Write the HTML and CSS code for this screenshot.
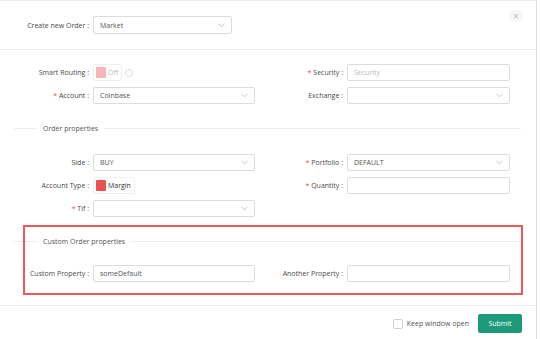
FILE: index.html
```html
<!DOCTYPE html>
<html lang="en">
  <head>
    <meta charset="UTF-8" />
    <meta name="viewport" content="width=device-width, initial-scale=1.0" />
    <title>Create new Order</title>
    <link rel="stylesheet" href="styles.css">
  </head>
  <body>
    <div class="modal">
      <div class="modal-header">
        <div class="field">
          <label class="lbl lbl-left">Create new Order :</label>
          <div class="select select-sm"><span>Market</span><svg class="chev" viewBox="0 0 8 5"><path d="M0.5 0.5 L4 4 L7.5 0.5" /></svg></div>
        </div>
        <button class="close" type="button">&times;</button>
      </div>

      <div class="modal-body">
        <div class="grid">
          <div class="col">
            <div class="field">
              <label class="lbl lbl-left">Smart Routing :</label>
              <div class="toggle"><span class="sq sq-off"></span><span class="toggle-off">Off</span></div>
              <span class="info">?</span>
            </div>
            <div class="field">
              <label class="lbl lbl-left"><i class="req">*</i> Account :</label>
              <div class="select"><span>Coinbase</span><svg class="chev" viewBox="0 0 8 5"><path d="M0.5 0.5 L4 4 L7.5 0.5" /></svg></div>
            </div>
          </div>
          <div class="col">
            <div class="field">
              <label class="lbl lbl-right"><i class="req">*</i> Security :</label>
              <div class="input"><span class="ph">Security</span></div>
            </div>
            <div class="field">
              <label class="lbl lbl-right">Exchange :</label>
              <div class="select"><span></span><svg class="chev" viewBox="0 0 8 5"><path d="M0.5 0.5 L4 4 L7.5 0.5" /></svg></div>
            </div>
          </div>
        </div>

        <div class="divider"><span>Order properties</span></div>

        <div class="grid">
          <div class="col">
            <div class="field">
              <label class="lbl lbl-left">Side :</label>
              <div class="select"><span>BUY</span><svg class="chev" viewBox="0 0 8 5"><path d="M0.5 0.5 L4 4 L7.5 0.5" /></svg></div>
            </div>
            <div class="field">
              <label class="lbl lbl-left">Account Type :</label>
              <div class="toggle"><span class="sq sq-on"></span><span class="toggle-on">Margin</span></div>
            </div>
            <div class="field">
              <label class="lbl lbl-left"><i class="req">*</i> Tif :</label>
              <div class="select"><span></span><svg class="chev" viewBox="0 0 8 5"><path d="M0.5 0.5 L4 4 L7.5 0.5" /></svg></div>
            </div>
          </div>
          <div class="col">
            <div class="field">
              <label class="lbl lbl-right"><i class="req">*</i> Portfolio :</label>
              <div class="select"><span>DEFAULT</span><svg class="chev" viewBox="0 0 8 5"><path d="M0.5 0.5 L4 4 L7.5 0.5" /></svg></div>
            </div>
            <div class="field">
              <label class="lbl lbl-right"><i class="req">*</i> Quantity :</label>
              <div class="input"><span></span></div>
            </div>
          </div>
        </div>

        <div class="custom">
          <div class="divider divider-custom"><span>Custom Order properties</span></div>
          <div class="grid">
            <div class="col">
              <div class="field">
                <label class="lbl lbl-left">Custom Property :</label>
                <div class="input"><span>someDefault</span></div>
              </div>
            </div>
            <div class="col">
              <div class="field">
                <label class="lbl lbl-right">Another Property :</label>
                <div class="input"><span></span></div>
              </div>
            </div>
          </div>
          <div class="highlight"></div>
        </div>
      </div>

      <div class="modal-footer">
        <label class="keep"><span class="checkbox"></span>Keep window open</label>
        <button class="submit" type="button">Submit</button>
      </div>
    </div>
  </body>
</html>
```

FILE: styles.css
```css
body {
  margin: 0;
  background: #ffffff;
  font-family: "Open Sans", "Liberation Sans", sans-serif;
  font-size: 7px;
  color: #444;
}
.modal {
  position: relative;
  width: 536px;
  height: 338px;
  border-top: 1px solid #eeeeee;
  border-right: 1px solid #dddddd;
  background: #fff;
}
.modal-header {
  height: 48px;
  border-bottom: 1px solid #f0f0f0;
  display: flex;
  align-items: center;
  justify-content: space-between;
  padding-right: 14px;
}
.close {
  width: 12px;
  height: 12px;
  padding: 0;
  border: none;
  background: #f7f7f7;
  color: #bbb;
  font-size: 10px;
  line-height: 11px;
  margin-top: -18px;
}
.modal-body {
  padding-top: 14px;
}
.grid {
  display: grid;
  grid-template-columns: 270px 266px;
}
.col {
  display: flex;
  flex-direction: column;
  gap: 6px;
}
.field {
  display: flex;
  align-items: center;
  height: 17px;
}
.lbl {
  text-align: right;
  padding-right: 4px;
  color: #4a4a4a;
  white-space: nowrap;
}
.lbl-left {
  width: 89px;
}
.lbl-right {
  width: 73px;
}
.req {
  font-style: normal;
  color: #f04848;
}
.select,
.input {
  box-sizing: border-box;
  width: 162px;
  height: 17px;
  border: 1px solid #dcdcdc;
  border-radius: 2px;
  display: flex;
  align-items: center;
  justify-content: space-between;
  padding: 0 6px;
  color: #555;
}
.col + .col .select,
.col + .col .input {
  width: 163px;
}
.select-sm {
  width: 139px;
  height: 18px;
}
.chev {
  width: 7px;
  height: 5px;
  fill: none;
  stroke: #aaa;
  stroke-width: 0.8;
}
.ph {
  color: #bbb;
}
.toggle {
  box-sizing: border-box;
  height: 17px;
  border: 1px solid #f0f0f0;
  border-radius: 2px;
  display: flex;
  align-items: center;
  gap: 2px;
  padding: 0 3px 0 2px;
}
.sq {
  width: 10px;
  height: 11px;
  border-radius: 1px;
}
.sq-off {
  background: #f7b6b8;
}
.sq-on {
  background: #ea5151;
}
.toggle-off {
  color: #bbb;
}
.toggle-on {
  color: #333;
}
.info {
  margin-left: 3px;
  width: 6px;
  height: 6px;
  border: 1px solid #ddd;
  border-radius: 50%;
  color: #ccc;
  font-size: 4px;
  line-height: 6px;
  text-align: center;
}
.divider {
  display: flex;
  align-items: center;
  margin: 20px 15px 21px 14px;
  color: #555;
}
.divider::before {
  content: "";
  width: 23px;
  border-top: 1px solid #eeeeee;
}
.divider::after {
  content: "";
  flex: 1;
  border-top: 1px solid #eeeeee;
}
.divider span {
  padding: 0 6px;
}
.custom {
  position: relative;
  margin-top: 8px;
  padding-bottom: 23px;
  border-bottom: 1px solid #f0f0f0;
}
.divider-custom {
  margin: 0 15px 19px 14px;
  padding-top: 12px;
}
.highlight {
  position: absolute;
  left: 23px;
  top: 0;
  width: 496px;
  height: 66px;
  border: 2px solid #ec5a5a;
}
.modal-footer {
  display: flex;
  align-items: center;
  justify-content: flex-end;
  padding: 8px 14px 0 0;
  gap: 9px;
}
.keep {
  display: flex;
  align-items: center;
  gap: 4px;
  color: #555;
}
.checkbox {
  width: 10px;
  height: 10px;
  box-sizing: border-box;
  border: 1px solid #d0d0d0;
  border-radius: 2px;
}
.submit {
  width: 44px;
  height: 19px;
  border: none;
  border-radius: 2px;
  background: #1c9a79;
  color: #fff;
  font-family: "Open Sans", "Liberation Sans", sans-serif;
  font-size: 7px;
}
```
